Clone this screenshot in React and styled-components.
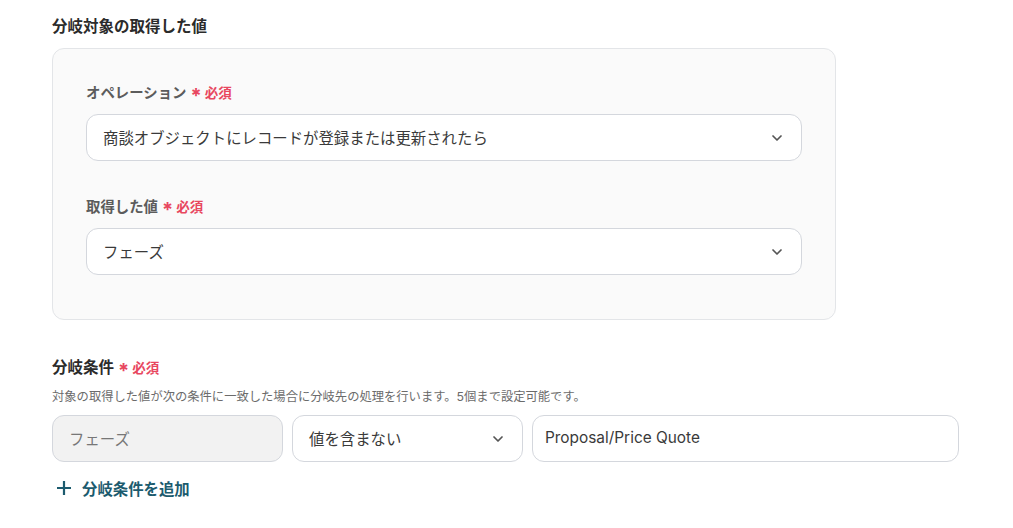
import React from 'react';
import styled, { createGlobalStyle } from 'styled-components';

const GlobalStyle = createGlobalStyle`
  body {
    margin: 0;
    background: #fff;
    font-family: Inter, "Noto Sans CJK JP", sans-serif;
    color: #333;
  }
`;

const Page = styled.div`
  padding: 16px 52px 0;
  width: 1013px;
  box-sizing: border-box;
`;

const SectionTitle = styled.h2`
  margin: 0;
  font-size: 15.5px;
  font-weight: 700;
  color: #2b2b2b;
  line-height: 22px;
`;

const Panel = styled.div`
  margin-top: 10px;
  width: 784px;
  box-sizing: border-box;
  background: #fafafa;
  border: 1px solid #e3e5e8;
  border-radius: 12px;
  padding: 33px 33px 44px;
  display: flex;
  flex-direction: column;
  gap: 35px;
`;

const Field = styled.div`
  display: flex;
  flex-direction: column;
  gap: 10px;
`;

const Label = styled.div`
  font-size: ${(p) => p.$size || '14.4px'};
  font-weight: 700;
  color: ${(p) => p.$color || '#5c5c5c'};
  line-height: 22px;
  display: flex;
  align-items: center;
`;

const Required = styled.span`
  color: #e8475f;
  font-size: 13.5px;
  font-weight: 700;
  margin-left: 4px;
  display: inline-flex;
  align-items: center;
  gap: 3px;

  b {
    font-size: 20px;
    font-weight: 700;
    line-height: 1;
    position: relative;
    top: 3px;
  }
`;

const Select = styled.div`
  width: ${(p) => p.$width || '716px'};
  height: 47px;
  box-sizing: border-box;
  background: ${(p) => (p.$disabled ? '#f2f2f2' : '#fff')};
  border: 1px solid #d4d7dd;
  border-radius: 12px;
  padding: 0 ${(p) => p.$pad || '16px'} 2px;
  display: flex;
  align-items: center;
  justify-content: space-between;
  font-size: 15.4px;
  color: ${(p) => (p.$disabled ? '#777' : '#3a3a3a')};
  flex-shrink: 0;

  svg {
    margin-top: 2px;
  }
`;

const Chevron = () => (
  <svg width="16" height="16" viewBox="0 0 24 24" fill="none" stroke="#555" strokeWidth="2.6" strokeLinecap="round" strokeLinejoin="round">
    <path d="M6 9l6 6 6-6" />
  </svg>
);

const Section = styled.div`
  margin-top: 37px;
`;

const Description = styled.div`
  margin-top: 9px;
  font-size: 12.3px;
  color: #6b6b6b;
  line-height: 18px;
`;

const ConditionRow = styled.div`
  margin-top: 9px;
  display: flex;
  gap: 9px;
`;

const AddButton = styled.button`
  margin-top: 15px;
  border: 0;
  background: none;
  padding: 0 0 0 4px;
  display: flex;
  align-items: center;
  gap: 10px;
  font-family: inherit;
  font-size: 15.4px;
  font-weight: 700;
  color: #1c5b6e;
  cursor: pointer;
`;

function RequiredMark() {
  return (
    <Required>
      <b>*</b>必須
    </Required>
  );
}

export default function App() {
  return (
    <>
      <GlobalStyle />
      <Page>
        <SectionTitle>分岐対象の取得した値</SectionTitle>
        <Panel>
          <Field>
            <Label>
              オペレーション
              <RequiredMark />
            </Label>
            <Select>
              商談オブジェクトにレコードが登録または更新されたら
              <Chevron />
            </Select>
          </Field>
          <Field>
            <Label>
              取得した値
              <RequiredMark />
            </Label>
            <Select>
              フェーズ
              <Chevron />
            </Select>
          </Field>
        </Panel>

        <Section>
          <Label $color="#2b2b2b" $size="15.5px">
            分岐条件
            <RequiredMark />
          </Label>
          <Description>
            対象の取得した値が次の条件に一致した場合に分岐先の処理を行います。5個まで設定可能です。
          </Description>
          <ConditionRow>
            <Select $width="231px" $disabled>
              フェーズ
            </Select>
            <Select $width="231px">
              値を含まない
              <Chevron />
            </Select>
            <Select $width="427px" $pad="12px">
              Proposal/Price Quote
            </Select>
          </ConditionRow>
          <AddButton>
            <svg width="16" height="16" viewBox="0 0 16 16" fill="none" stroke="#1c5b6e" strokeWidth="2.2">
              <path d="M8 1v14M1 8h14" />
            </svg>
            分岐条件を追加
          </AddButton>
        </Section>
      </Page>
    </>
  );
}
